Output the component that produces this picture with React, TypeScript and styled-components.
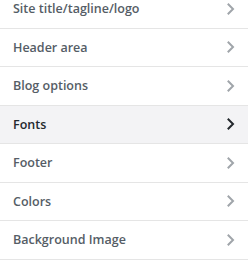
import React, { FC } from 'react';
import styled, { createGlobalStyle } from 'styled-components';

const sections = [
	'Site title/tagline/logo',
	'Header area',
	'Blog options',
	'Fonts',
	'Footer',
	'Colors',
	'Background Image',
];

const ACTIVE = 'Fonts';

const GlobalStyle = createGlobalStyle`
	html, body {
		margin: 0;
		padding: 0;
		background: #fff;
		overflow: hidden;
	}
`;

const Chevron: FC<{ active: boolean }> = ({ active }) => (
	<Arrow width="8" height="12" viewBox="0 0 8 12" $active={active}>
		<path d="M1.5 1.5 L6 6 L1.5 10.5" fill="none" strokeWidth="2" strokeLinecap="square" />
	</Arrow>
);

const App: FC = () => (
	<>
		<GlobalStyle />
		<Panel>
			{sections.map((title) => (
				<Section key={title} $active={title === ACTIVE}>
					<Title>{title}</Title>
					<Chevron active={title === ACTIVE} />
				</Section>
			))}
		</Panel>
	</>
);

const Panel = styled.ul`
	list-style: none;
	margin: -10px 0 0;
	padding: 0;
	width: 248px;
	font-family: 'Open Sans', 'Liberation Sans', sans-serif;
`;

const Section = styled.li<{ $active: boolean }>`
	display: flex;
	align-items: center;
	justify-content: space-between;
	box-sizing: border-box;
	height: 38.5px;
	padding: 0 13px 0 13px;
	border-bottom: 1px solid #e5e5e5;
	background: ${(props) => (props.$active ? '#f3f3f5' : '#fff')};
	color: ${(props) => (props.$active ? '#23282d' : '#555d66')};
`;

const Title = styled.span`
	font-size: 12.5px;
	font-weight: 600;
	line-height: 21px;
`;

const Arrow = styled.svg<{ $active: boolean }>`
	display: block;
	stroke: ${(props) => (props.$active ? '#23282d' : '#a0a5aa')};
`;

export default App;
